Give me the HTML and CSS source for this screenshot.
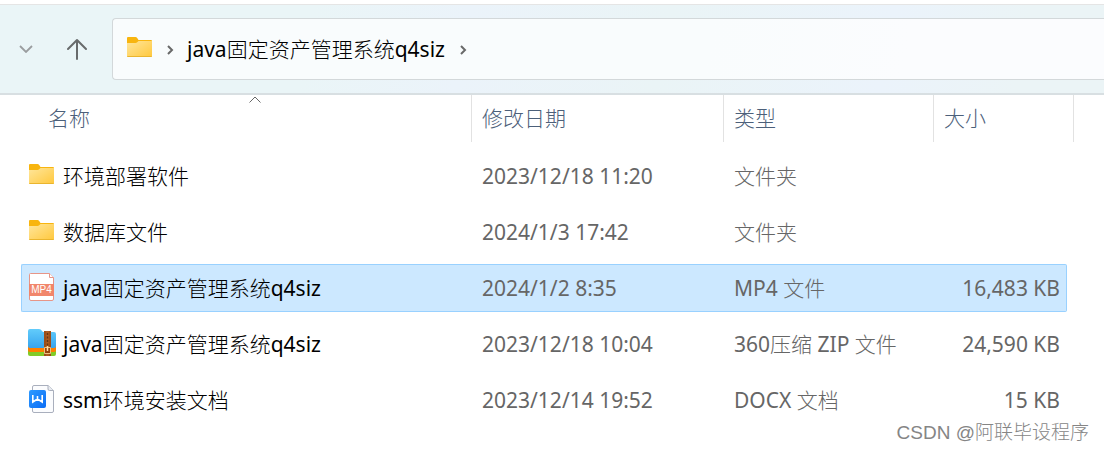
FILE: index.html
```html
<!DOCTYPE html>
<html lang="zh-CN">
<head>
<meta charset="utf-8">
<title>java固定资产管理系统q4siz</title>
<link rel="stylesheet" href="styles.css">
</head>
<body>
<svg class="defs" aria-hidden="true">
  <defs>
    <linearGradient id="gold" x1="0" y1="0" x2="1" y2="1"><stop offset="0" stop-color="#ffe69b"/><stop offset="1" stop-color="#ffc83d"/></linearGradient>
    <linearGradient id="sky" x1="0" y1="0" x2="0" y2="1"><stop offset="0" stop-color="#62ccfb"/><stop offset="1" stop-color="#37a4ee"/></linearGradient>
    <linearGradient id="blue" x1="0" y1="0" x2="1" y2="1"><stop offset="0" stop-color="#2f9bff"/><stop offset="1" stop-color="#0a6cf5"/></linearGradient>
    <symbol id="folder" viewBox="0 0 25 20">
      <path d="M1 0h7.500q1 0 1.700 1L11.500 3H24q1 0 1 1v3H0V1q0-1 1-1z" fill="#f8b50f"/>
      <path d="M0 6h8.500q1 0 1.700-.8L11.500 4H25v15q0 1-1 1H1q-1 0-1-1z" fill="url(#gold)"/>
      <path d="M.3 19.500h24.400" stroke="#eab52e"/>
    </symbol>
  </defs>
</svg>
<header class="toolbar">
  <nav class="nav">
    <button class="nav-button" aria-label="最近浏览的位置"><svg width="14" height="8" viewBox="0 0 14 8"><path d="M1 1l6 6 6-6" fill="none" stroke="#9a9d9f" stroke-width="1.800"/></svg></button>
    <button class="nav-button" aria-label="向上"><svg width="20" height="22" viewBox="0 0 20 22"><path d="M10 21V2M1 11l9-9 9 9" fill="none" stroke="#686b6c" stroke-width="2" stroke-linecap="round" stroke-linejoin="round"/></svg></button>
  </nav>
  <div class="address">
    <svg class="address-folder" width="25" height="20"><use href="#folder"/></svg>
    <svg class="crumb-arrow" width="7" height="10" viewBox="0 0 7 10"><path d="M1 1l4 4-4 4" fill="none" stroke="#696969" stroke-width="2"/></svg>
    <button class="crumb">java固定资产管理系统q4siz</button>
    <svg class="crumb-arrow" width="7" height="10" viewBox="0 0 7 10"><path d="M1 1l4 4-4 4" fill="none" stroke="#696969" stroke-width="2"/></svg>
  </div>
</header>
<main class="files">
  <table class="list">
    <colgroup><col><col class="col-date"><col class="col-type"><col class="col-size"><col class="col-end"></colgroup>
    <thead>
      <tr>
        <th class="head-name" aria-sort="ascending"><button class="sort">名称</button><svg class="sort-mark" width="12" height="7" viewBox="0 0 12 7"><path d="M.5 6.500L6 1l5.500 5.500" fill="none" stroke="#686868"/></svg></th>
        <th><button class="sort">修改日期</button></th>
        <th><button class="sort">类型</button></th>
        <th><button class="sort">大小</button></th>
        <td class="head-end"></td>
      </tr>
    </thead>
    <tbody>
      <tr>
        <td><div class="name"><svg class="icon" viewBox="0 0 28 28"><use href="#folder" x="1" y="3" width="25" height="20"/></svg><span>环境部署软件</span></div></td>
        <td>2023/12/18 11:20</td><td>文件夹</td><td></td><td class="end"></td>
      </tr>
      <tr>
        <td><div class="name"><svg class="icon" viewBox="0 0 28 28"><use href="#folder" x="1" y="3" width="25" height="20"/></svg><span>数据库文件</span></div></td>
        <td>2024/1/3 17:42</td><td>文件夹</td><td></td><td class="end"></td>
      </tr>
      <tr class="selected">
        <td><div class="name"><svg class="icon" viewBox="0 0 28 28"><path d="M2.500.5h19l4 4V26q0 1.500-1.500 1.500H3q-1.500 0-1.500-1.500V1.500q0-1 1-1z" fill="#fff" stroke="#e79587"/><path d="M21.500.5v4h4" fill="#fff" stroke="#e79587"/><path d="M1 11h25v12H1z" fill="#f1866b"/><text class="mp4" x="13.500" y="20" text-anchor="middle">MP4</text></svg><span>java固定资产管理系统q4siz</span></div></td>
        <td>2024/1/2 8:35</td><td>MP4 文件</td><td class="size">16,483 KB</td><td class="end"></td>
      </tr>
      <tr>
        <td><div class="name"><svg class="icon" viewBox="0 0 28 28"><path d="M0 20h28v5q0 2-2 2H2q-2 0-2-2z" fill="#82cb27"/><path d="M0 17h28v4q0 2-2 2H2q-2 0-2-2z" fill="#ff8000"/><path d="M0 2q0-2 2-2h9q2 0 3 2l1 1h11q2 0 2 2v12q0 2-2 2H2q-2 0-2-2z" fill="url(#sky)"/><path d="M16 2h7v25h-7z" fill="#ac5b20"/><path d="M17 2v25M22 2v25" stroke="#8c4311"/><path d="M19.500 4v14" stroke="#633615" stroke-width="1.500" stroke-dasharray="2 1.500"/><path d="M16.500 18.500h6v6h-6z" fill="#95430d" stroke="#edc184"/><path d="M19.500 17v5" stroke="#ffdda5" stroke-width="1.500"/></svg><span>java固定资产管理系统q4siz</span></div></td>
        <td>2023/12/18 10:04</td><td>360压缩 ZIP 文件</td><td class="size">24,590 KB</td><td class="end"></td>
      </tr>
      <tr>
        <td><div class="name"><svg class="icon" viewBox="0 0 28 28"><path d="M6 .5h14l5.500 5V26q0 1.500-1.500 1.500H6q-1.500 0-1.500-1.500V2Q4.500.5 6 .5z" fill="#fbfcfe" stroke="#a9afbd"/><path d="M20 .5V4q0 1.500 1.500 1.500h4" fill="#e8ebf0" stroke="#a9afbd"/><rect x="1" y="5" width="17" height="18" rx="2" fill="url(#blue)"/><path d="M4.800 10v7l4.700-3 4.700 3v-7M9.500 11v3" fill="none" stroke="#fff" stroke-width="1.600"/></svg><span>ssm环境安装文档</span></div></td>
        <td>2023/12/14 19:52</td><td>DOCX 文档</td><td class="size">15 KB</td><td class="end"></td>
      </tr>
    </tbody>
  </table>
</main>
<div class="watermark">CSDN @阿联毕设程序</div>
</body>
</html>
```

FILE: styles.css
```css
* { box-sizing: border-box; }
body {
  margin: 0;
  padding-top: 4px;
  background: #fff;
  color: #000;
  font: 400 21px/28px "Noto Sans", "Noto Sans CJK SC Light", "Noto Sans CJK SC", sans-serif;
  overflow-x: hidden;
}
button {
  padding: 0;
  border: 0;
  background: none;
  color: inherit;
  font: inherit;
}
svg { display: block; flex: none; }
.defs { position: absolute; width: 0; height: 0; }
.toolbar {
  display: flex;
  padding: 13px 0;
  border-top: 1px solid #e5e5e5;
  border-bottom: 2px solid #d8dfe2;
  background: linear-gradient(100deg, #eaf5f7 0%, #eaf5f7 28%, #ebf3fa 42%, #eaf4f6 60%, #ebf3fb 80%, #ebf4f6 92%);
}
.nav {
  display: flex;
  align-items: center;
  gap: 34px;
  width: 112px;
  padding-left: 19px;
}
.nav-button { display: flex; }
.address {
  display: flex;
  flex: 1;
  align-items: center;
  height: 62px;
  padding-left: 14px;
  border: 1px solid #d3d8da;
  border-right: 0;
  border-radius: 4px 0 0 4px;
  background: linear-gradient(100deg, #f9fcfd 60%, #fbfcfe 80%);
}
.address-folder { margin-bottom: 4px; }
.crumb-arrow { margin: 2px 0 0 15px; }
.crumb { margin-left: 13px; }
.list {
  width: calc(100% - 51px);
  margin: -8px 30px 0 21px;
  border-collapse: separate;
  border-spacing: 0 8px;
  table-layout: fixed;
}
.col-date { width: 252px; }
.col-type { width: 210px; }
.col-size { width: 134px; }
.col-end { width: 7px; }
th {
  position: relative;
  height: 49px;
  padding: 0;
  color: #4c607a;
  font-weight: 400;
  text-align: left;
  vertical-align: top;
}
.sort {
  display: block;
  width: 100%;
  height: 47px;
  padding: 0 0 2px 10px;
  border-left: 1px solid #e2e2e2;
  text-align: left;
}
.head-name .sort { padding-left: 27px; border-left: 0; }
.sort-mark { position: absolute; top: 1px; left: 228px; }
.head-end { padding: 0; vertical-align: top; }
.head-end::after {
  display: block;
  height: 47px;
  border-right: 1px solid #e2e2e2;
  content: "";
}
tbody td {
  height: 48px;
  padding: 0 6px 0 11px;
  border: solid transparent;
  border-width: 1px 0;
  color: #666;
  white-space: nowrap;
}
tbody td:first-child {
  padding-left: 6px;
  border-left-width: 1px;
  border-radius: 2px 0 0 2px;
  color: #000;
}
tbody td:nth-child(4) {
  border-right-width: 1px;
  border-radius: 0 2px 2px 0;
}
tbody td.end { padding: 0; }
.selected td:not(.end) { border-color: #99d1ff; background: #cce8ff; }
.name { display: flex; align-items: center; gap: 7px; }
.icon { width: 28px; height: 28px; margin-bottom: 2px; }
.mp4 { fill: #fff; font: 400 10px "Liberation Sans", sans-serif; }
.size { text-align: right; }
.watermark {
  position: absolute;
  right: 15px;
  bottom: 4px;
  color: #858585;
  font-family: "Liberation Sans", "Noto Sans CJK SC Light", "Noto Sans CJK SC", sans-serif;
  font-size: 19px;
  text-shadow: 1px 1px 0 #fff;
}
```
